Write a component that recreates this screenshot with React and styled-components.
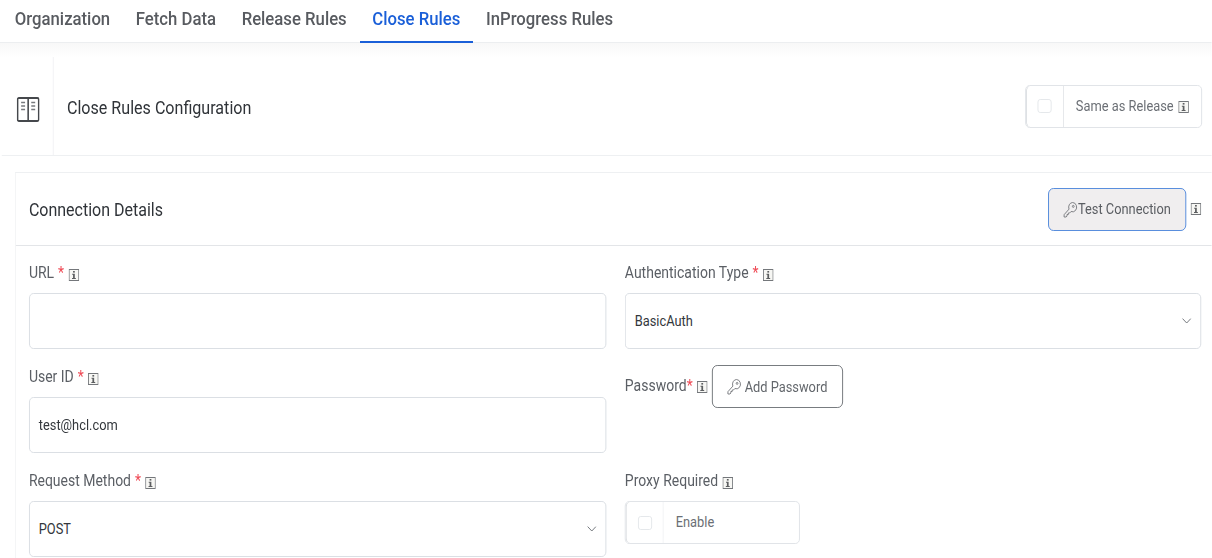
import React from "react";
import styled, { createGlobalStyle } from "styled-components";

/* The reference is a page squeezed horizontally: lay out at full width, then squeeze. */
const K = 0.88;
const sx = (v) => `${(v / K).toFixed(2)}px`;

const Global = createGlobalStyle`
  html, body { margin: 0; padding: 0; background: #fff; }
  body { width: 1212px; height: 558px; overflow: hidden; font-family: Roboto, "Liberation Sans", sans-serif; color: #4b4f56; }
  * { box-sizing: border-box; }
`;

const Page = styled.div`
  width: ${sx(1212)};
  height: 558px;
  overflow: hidden;
  display: flex;
  flex-direction: column;
  transform: scaleX(${K});
  transform-origin: 0 0;
`;
const Tabs = styled.nav`
  height: 43px;
  display: flex;
  align-items: stretch;
  padding-left: ${sx(2)};
  border-bottom: 1px solid #eceef0;
`;
const Tab = styled.div`
  height: 43px;
  padding: 0 ${sx(12.8)} 6px;
  display: flex;
  align-items: center;
  white-space: nowrap;
  font-size: 19px;
  font-weight: 500;
  color: ${(p) => (p.$active ? "#1a5fd8" : "#585b60")};
  box-shadow: ${(p) => (p.$active ? "inset 0 -2px 0 #1a5fd8" : "none")};
`;
const Band = styled.div`
  background: linear-gradient(#f8f8f8, #fff);
  height: 14px;
`;
const ConfigCard = styled.section`
  height: 99px;
  margin-left: ${sx(2)};
  display: flex;
  align-items: stretch;
  border-bottom: 1px solid #eef0f2;
`;
const IconCell = styled.div`
  width: ${sx(52)};
  display: flex;
  align-items: center;
  justify-content: center;
  padding: 6px 0 0 2px;
  border-right: 1px solid #f0f1f3;
`;
const ConfigTitle = styled.h1`
  margin: 0;
  flex: 1;
  padding: 2px 0 0 ${sx(13)};
  display: flex;
  align-items: center;
  font-size: 18.3px;
  font-weight: 400;
  color: #2f3338;
`;
const ToggleBox = styled.div`
  display: flex;
  align-items: stretch;
  height: ${(p) => p.$h}px;
  width: ${(p) => sx(p.$w)};
  border: 1px solid #dfe2e6;
  border-radius: 5px;
  background: #fff;
`;
const CheckCell = styled.div`
  width: ${sx(38)};
  flex: none;
  display: flex;
  align-items: center;
  justify-content: center;
  border-right: 1px solid #dfe2e6;
  border-left: 1px solid #d5d8dc;
  border-radius: 5px 0 0 5px;
`;
const Check = styled.span`
  width: ${sx(14)};
  height: 14px;
  border: 1px solid #e3e6ea;
  border-radius: 3px;
`;
const ToggleText = styled.span`
  font-size: ${(p) => p.$size || 14.6}px;
  color: #6b6f75;
  padding: 0 0 1px ${sx(12)};
  display: flex;
  align-items: center;
  white-space: nowrap;
`;
const ToggleSlot = styled.div`
  align-self: center;
  margin-right: ${sx(10)};
`;
const Section = styled.section`
  margin: 16px 0 0 ${sx(15)};
  border-top: 1px solid #eef0f2;
  border-left: 1px solid #f2f3f5;
  flex: 1;
`;
const SectionHead = styled.header`
  height: 73px;
  display: flex;
  align-items: center;
  padding: 0 ${sx(11)} 0 ${sx(13)};
  border-bottom: 1px solid #e3e5e8;
`;
const SectionTitle = styled.h2`
  margin: 0;
  flex: 1;
  font-size: 18.2px;
  font-weight: 400;
  color: #2f3338;
`;
const TestButton = styled.button`
  width: ${sx(138)};
  height: 43px;
  padding: 0;
  display: flex;
  align-items: center;
  justify-content: center;
  white-space: nowrap;
  border: 1px solid #4f88dc;
  border-radius: 6px;
  background: #f0eeef;
  color: #5a5d62;
  font: 400 14.6px Roboto, sans-serif;
`;
const Form = styled.div`
  display: grid;
  grid-template-columns: ${sx(577.3)} ${sx(576.4)};
  column-gap: ${sx(18.7)};
  padding-left: ${sx(13)};
`;
const Field = styled.div`
  height: 104px;
  display: flex;
  flex-direction: column;
`;
const Label = styled.label`
  height: 47px;
  padding-top: 17px;
  display: flex;
  align-items: flex-start;
  white-space: nowrap;
  font-size: 15.9px;
  line-height: 20px;
  color: #5b5f65;
`;
const Req = styled.span`
  color: #ef4a55;
  margin-left: ${(p) => (p.$tight ? 0 : sx(4))};
`;
const Input = styled.div`
  height: 56px;
  border: 1px solid #d9dde2;
  border-radius: 5px;
  padding: 0 ${sx(9)} 1px;
  display: flex;
  align-items: center;
  justify-content: space-between;
  font-size: 14.6px;
  color: #33373c;
  background: #fff;
`;
const PasswordRow = styled.div`
  display: flex;
  align-items: center;
  white-space: nowrap;
  height: 43px;
  margin-top: 15px;
  font-size: 15.9px;
  color: #5b5f65;
`;
const PasswordText = styled.span`
  padding-bottom: 2px;
`;
const AddButton = styled.button`
  width: ${sx(131)};
  height: 43px;
  margin-left: ${sx(4)};
  padding: 0;
  display: flex;
  align-items: center;
  justify-content: center;
  gap: 3px;
  white-space: nowrap;
  background: #fff;
  border: 1px solid #6f7378;
  border-radius: 6px;
  color: #63676c;
  font: 400 14.6px Roboto, sans-serif;
`;
const InfoSvg = styled.svg`
  flex: none;
  margin-left: ${(p) => sx(p.$ml ?? 4.5)};
  margin-top: ${(p) => p.$mt ?? 6}px;
`;
const Info = ({ ml, mt }) => (
  <InfoSvg $ml={ml} $mt={mt} width="12" height="12" viewBox="0 0 12 12">
    <rect x="0.5" y="0.5" width="11" height="11" fill="#f7f7f4" stroke="#74777b" />
    <rect x="5" y="2" width="2" height="1.6" fill="#5c5e60" />
    <path d="M4 4.8h3v4.2h1.2v1H3.8V9H5V5.8H4z" fill="#5c5e60" />
  </InfoSvg>
);
const Key = () => (
  <svg width="17" height="17" viewBox="0 0 17 17" fill="none" stroke="#777a7e" strokeWidth="1" style={{ flex: "none" }}>
    <path d="M10.8 1.5a4.7 4.7 0 0 1 3.3 8 4.7 4.7 0 0 1-5 1L7.5 12H6v1.5H4.5V15L3.5 16H1.2v-2.3l5.6-5.6a4.7 4.7 0 0 1 4-6.6z" />
    <circle cx="11.6" cy="5.4" r="1" />
  </svg>
);
const Chevron = () => (
  <svg width="11" height="6" viewBox="0 0 11 6" fill="none" stroke="#6d7176" strokeWidth="1">
    <path d="M.8.6 5.5 5l4.7-4.4" />
  </svg>
);
const BookIcon = () => (
  <svg width="26" height="25" viewBox="0 0 26 25" fill="none">
    <rect x="1" y="1" width="24" height="23" rx="1.5" stroke="#45484c" strokeWidth="1.8" />
    <path d="M13 1v23" stroke="#45484c" strokeWidth="1.8" />
    <path d="M5 5.5h4.5M5 9h4.5M5 12.5h4.5M16.5 5.5H21M16.5 9H21M16.5 12.5H21" stroke="#777a7e" strokeWidth="1.7" />
  </svg>
);

export default function App() {
  return (
    <Page>
      <Global />
      <Tabs>
        <Tab>Organization</Tab>
        <Tab>Fetch Data</Tab>
        <Tab>Release Rules</Tab>
        <Tab $active>Close Rules</Tab>
        <Tab>InProgress Rules</Tab>
      </Tabs>
      <Band />
      <ConfigCard>
        <IconCell><BookIcon /></IconCell>
        <ConfigTitle>Close Rules Configuration</ConfigTitle>
        <ToggleSlot>
          <ToggleBox $w={177} $h={43}>
            <CheckCell><Check /></CheckCell>
            <ToggleText>Same as Release<Info mt={2} /></ToggleText>
          </ToggleBox>
        </ToggleSlot>
      </ConfigCard>
      <Section>
        <SectionHead>
          <SectionTitle>Connection Details</SectionTitle>
          <TestButton><Key />Test Connection</TestButton>
          <Info mt={0} />
        </SectionHead>
        <Form>
          <Field>
            <Label>URL<Req>*</Req><Info /></Label>
            <Input />
          </Field>
          <Field>
            <Label>Authentication Type<Req>*</Req><Info /></Label>
            <Input>BasicAuth<Chevron /></Input>
          </Field>
          <Field>
            <Label>User ID<Req>*</Req><Info /></Label>
            <Input>test@hcl.com</Input>
          </Field>
          <Field>
            <PasswordRow><PasswordText>Password<Req $tight>*</Req></PasswordText><Info mt={0} /><AddButton><Key />Add Password</AddButton></PasswordRow>
          </Field>
          <Field>
            <Label>Request Method<Req>*</Req><Info /></Label>
            <Input>POST<Chevron /></Input>
          </Field>
          <Field>
            <Label>Proxy Required<Info /></Label>
            <ToggleBox $w={175} $h={43}>
              <CheckCell><Check /></CheckCell>
              <ToggleText>Enable</ToggleText>
            </ToggleBox>
          </Field>
        </Form>
      </Section>
    </Page>
  );
}
